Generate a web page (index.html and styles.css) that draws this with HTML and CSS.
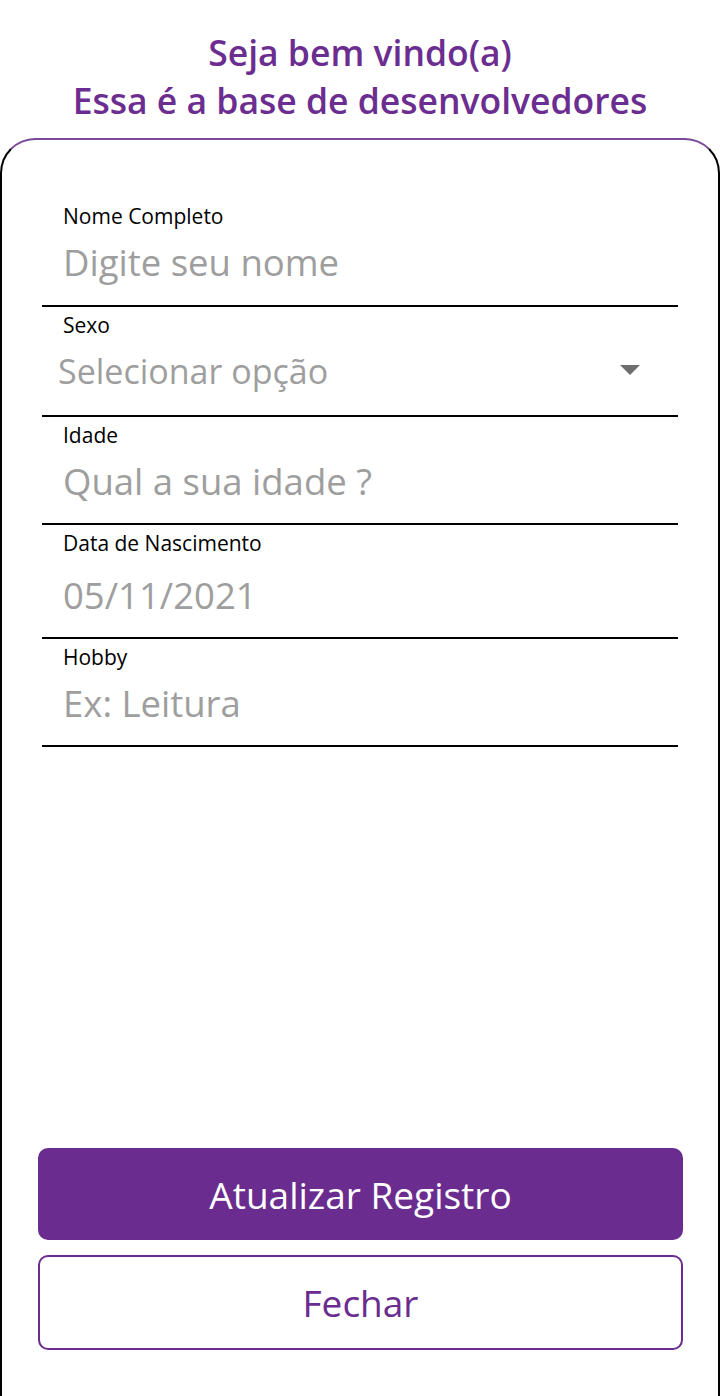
FILE: index.html
```html
<!DOCTYPE html>
<html lang="pt-BR">
<head>
<meta charset="utf-8">
<title>Cadastro</title>
<link rel="stylesheet" href="styles.css">
</head>
<body>
<div class="screen">
  <header class="header">
    <h1 class="title">Seja bem vindo(a)<br>Essa é a base de desenvolvedores</h1>
  </header>
  <main class="card">
    <div class="form">
      <div class="field">
        <div class="label">Nome Completo</div>
        <div class="value">Digite seu nome</div>
      </div>
      <div class="field field-select">
        <div class="label">Sexo</div>
        <div class="select-row">
          <div class="value">Selecionar opção</div>
          <span class="arrow"></span>
        </div>
      </div>
      <div class="field">
        <div class="label">Idade</div>
        <div class="value">Qual a sua idade ?</div>
      </div>
      <div class="field field-date">
        <div class="label">Data de Nascimento</div>
        <div class="value">05/11/2021</div>
      </div>
      <div class="field">
        <div class="label">Hobby</div>
        <div class="value">Ex: Leitura</div>
      </div>
    </div>
    <div class="actions">
      <button class="btn btn-primary">Atualizar Registro</button>
      <button class="btn btn-outline">Fechar</button>
    </div>
  </main>
</div>
</body>
</html>
```
FILE: styles.css
```css
* { box-sizing: border-box; }
html, body { margin: 0; padding: 0; background: #ffffff; }
body {
  font-family: "Open Sans", "Noto Sans", sans-serif;
  color: #000;
}
.screen {
  width: 720px;
  height: 1396px;
  display: flex;
  flex-direction: column;
  overflow: hidden;
}
.header {
  padding-top: 28px;
  padding-bottom: 14px;
}
.title {
  margin: 0;
  text-align: center;
  color: #6b2d8f;
  font-size: 35.5px;
  font-weight: 600;
  line-height: 48px;
}
.card {
  flex: 1;
  display: flex;
  flex-direction: column;
  border-top: 2px solid #7a4a9a;
  border-left: 2px solid #000;
  border-right: 2px solid #000;
  border-radius: 35px 35px 0 0;
  padding-bottom: 46px;
}
.form {
  padding: 0 40px;
  padding-top: 64px;
}
.field {
  padding: 6px 0 18px 21px;
  border-bottom: 2px solid #000;
}
.field:first-child { padding-top: 0; padding-bottom: 19px; }
.label {
  font-size: 21px;
  font-weight: 500;
  line-height: 24px;
  color: #000;
}
.value {
  margin-top: 10px;
  font-size: 36.5px;
  line-height: 48px;
  color: #9e9e9e;
}
.field-date .value { margin-top: 16px; }
.field-select { padding-right: 38px; padding-bottom: 20px; }
.field-select .value { font-size: 34px; }
.select-row {
  display: flex;
  align-items: center;
  justify-content: space-between;
  margin-left: -5px;
}
.arrow {
  width: 0;
  height: 0;
  margin-top: 8px;
  border-left: 10px solid transparent;
  border-right: 10px solid transparent;
  border-top: 10px solid #6e6e6e;
}
.actions {
  margin-top: auto;
  padding: 0 35px 0 36px;
  display: flex;
  flex-direction: column;
  gap: 15px;
}
.btn {
  font-family: "Open Sans", "Noto Sans", sans-serif;
  font-size: 37px;
  border-radius: 10px;
  width: 100%;
  cursor: pointer;
}
.btn-primary {
  height: 92px;
  background: #6a2c8e;
  color: #ffffff;
  border: none;
}
.btn-outline {
  height: 95px;
  background: #ffffff;
  color: #6a2c8e;
  border: 2px solid #6a2c8e;
}
```
